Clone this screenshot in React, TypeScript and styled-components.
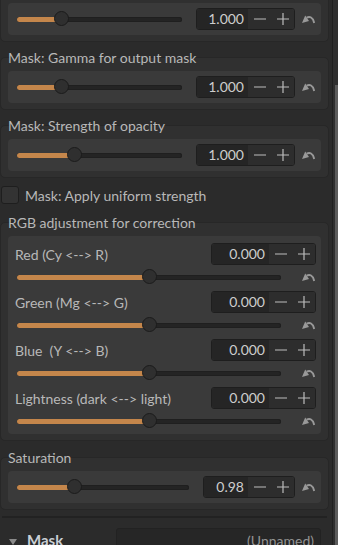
import React from 'react';
import styled, { createGlobalStyle } from 'styled-components';

const GlobalStyle = createGlobalStyle`
  html, body {
    margin: 0;
    padding: 0;
    background: #2b2b2b;
  }
`;

const Page = styled.div`
  width: 338px;
  height: 545px;
  overflow: hidden;
  display: flex;
  background: #2b2b2b;
  font-family: Lato, 'Noto Sans', sans-serif;
  font-size: 14px;
  color: #b8b8b8;
`;

const Content = styled.div`
  flex: 1;
  min-width: 0;
  padding-right: 3px;
  display: flex;
  flex-direction: column;
`;

const Scrollbar = styled.div`
  width: 5px;
  border-left: 1px solid #202020;
  background: #2f2f2f;
  display: flex;
  flex-direction: column;
  align-items: flex-end;
`;

const Thumb = styled.div`
  width: 3px;
  margin-top: 85px;
  flex: 1;
  background: #5c5c5c;
`;

const Frame = styled.div<{ $mt: number }>`
  margin-top: ${p => p.$mt}px;
  background: #303030;
  border: 1px solid #272727;
  border-radius: 5px;
  padding: 7px 7px 6px 7px;
  flex-shrink: 0;
`;

const LabeledFrame = styled(Frame)`
  padding-top: 0;
`;

const Legend = styled.div`
  position: relative;
  margin: -8px 0 5px 0;
  height: 16px;
  line-height: 16px;
  white-space: nowrap;
`;

const Card = styled.div`
  background: #3a3a3a;
  border-radius: 4px;
  height: 32px;
  display: flex;
  align-items: center;
  padding-left: 9px;
`;

const TallCard = styled.div`
  background: #3a3a3a;
  border-radius: 4px;
  padding: 7px 0 1px 0;
  display: flex;
  flex-direction: column;
  gap: 2px;
`;

const TrackWrap = styled.div<{ $w?: number }>`
  position: relative;
  height: 16px;
  display: flex;
  align-items: center;
  ${p => (p.$w ? `width: ${p.$w}px;` : 'flex: 1;')}
  margin-right: 14px;
`;

const Track = styled.div`
  width: 100%;
  height: 5px;
  border-radius: 3px;
  background: #242424;
  box-shadow: inset 0 0 0 1px #1f1f1f;
  overflow: hidden;
`;

const Fill = styled.div`
  height: 100%;
  background: #c4864b;
`;

const Knob = styled.div`
  position: absolute;
  top: 0;
  width: 15px;
  height: 15px;
  margin-left: -7.5px;
  border-radius: 50%;
  background: #2f2f2f;
  border: 1px solid #1b1b1b;
  box-sizing: border-box;
`;

const ValueBox = styled.div`
  display: flex;
  height: 22px;
  border: 1px solid #1e1e1e;
  border-radius: 3px;
  overflow: hidden;
  box-sizing: border-box;
  flex-shrink: 0;
`;

const NumberPart = styled.div<{ $w: number }>`
  width: ${p => p.$w}px;
  background: #252525;
  color: #cdcdcd;
  text-align: right;
  padding-right: 4px;
  box-sizing: border-box;
  line-height: 20px;
`;

const StepButton = styled.div`
  width: 23px;
  background: #2d2d2d;
  display: flex;
  align-items: center;
  justify-content: center;
`;

const ResetSlot = styled.div`
  width: 13px;
  height: 9px;
  margin: 0 6px 0 7px;
  display: flex;
  flex-shrink: 0;
`;

const RowHeader = styled.div`
  display: flex;
  align-items: center;
  justify-content: space-between;
  padding: 0 5px 0 7px;
  height: 22px;
`;

const RowLabel = styled.span`
  white-space: pre;
`;

const SliderLine = styled.div`
  display: flex;
  align-items: center;
  height: 24px;
  padding-left: 9px;
`;

const Spacer = styled.div`
  flex: 1;
`;

const CheckRow = styled.div`
  display: flex;
  align-items: center;
  gap: 6px;
  margin: 8px 0 0 1px;
  height: 18px;
  flex-shrink: 0;
`;

const CheckBox = styled.div`
  width: 18px;
  height: 18px;
  box-sizing: border-box;
  border: 1px solid #1e1e1e;
  border-radius: 3px;
  background: #333333;
`;

const Separator = styled.div`
  height: 2px;
  margin: 6px 2px 0 2px;
  background: #222222;
  flex-shrink: 0;
`;

const SectionHeader = styled.div`
  display: flex;
  align-items: flex-start;
  margin-top: 10px;
  padding-left: 9px;
  height: 30px;
  flex-shrink: 0;
`;

const Triangle = styled.div`
  width: 0;
  height: 0;
  margin-top: 11px;
  border-left: 4px solid transparent;
  border-right: 4px solid transparent;
  border-top: 6px solid #8a8a8a;
`;

const HeaderTitle = styled.div`
  margin: 3px 0 0 10px;
  font-weight: 700;
  font-size: 15px;
  color: #c9cfd5;
`;

const NameBox = styled.div`
  margin-left: auto;
  margin-right: 8px;
  width: 205px;
  height: 30px;
  box-sizing: border-box;
  background: #262626;
  border: 1px solid #222222;
  border-radius: 3px;
  color: #939393;
  text-align: right;
  padding: 3px 6px 0 0;
`;

const Minus = () => (
  <svg width="12" height="12" viewBox="0 0 12 12">
    <line x1="0" y1="6" x2="12" y2="6" stroke="#bdbdbd" strokeWidth="1.2" />
  </svg>
);

const Plus = () => (
  <svg width="12" height="12" viewBox="0 0 12 12">
    <line x1="0" y1="6" x2="12" y2="6" stroke="#bdbdbd" strokeWidth="1.2" />
    <line x1="6" y1="0" x2="6" y2="12" stroke="#bdbdbd" strokeWidth="1.2" />
  </svg>
);

// curved "undo" arrow: wedge head on the left, tail arching down to the right
const ResetIcon = () => (
  <ResetSlot>
    <svg width="13" height="9" viewBox="0 0 13 9">
      <path d="M0 8 L3.2 0.6 L7 6 Z" fill="#999999" />
      <path d="M4.6 2.6 C7.6 1.4 11 1.8 12.2 8" stroke="#999999" strokeWidth="1.9" fill="none" />
    </svg>
  </ResetSlot>
);

const Slider: React.FC<{ frac: number; width?: number }> = ({ frac, width }) => {
  const pos = `calc(7.5px + (100% - 15px) * ${frac})`;
  return (
    <TrackWrap $w={width}>
      <Track>
        <Fill style={{ width: pos }} />
      </Track>
      <Knob style={{ left: pos }} />
    </TrackWrap>
  );
};

const Value: React.FC<{ text: string; w: number }> = ({ text, w }) => (
  <ValueBox>
    <NumberPart $w={w}>{text}</NumberPart>
    <StepButton>
      <Minus />
    </StepButton>
    <StepButton>
      <Plus />
    </StepButton>
  </ValueBox>
);

const SingleSlider: React.FC<{ frac: number; text: string; w: number }> = ({ frac, text, w }) => (
  <Card>
    <Slider frac={frac} />
    <Value text={text} w={w} />
    <ResetIcon />
  </Card>
);

const rgbRows = [
  { label: 'Red (Cy <--> R)' },
  { label: 'Green (Mg <--> G)' },
  { label: 'Blue  (Y <--> B)' },
  { label: 'Lightness (dark <--> light)' },
];

export default function App() {
  return (
    <Page>
      <GlobalStyle />
      <Content>
        <Frame $mt={-5}>
          <SingleSlider frac={0.248} text="1.000" w={51} />
        </Frame>

        <LabeledFrame $mt={15}>
          <Legend>Mask: Gamma for output mask</Legend>
          <SingleSlider frac={0.248} text="1.000" w={51} />
        </LabeledFrame>

        <LabeledFrame $mt={15}>
          <Legend>Mask: Strength of opacity</Legend>
          <SingleSlider frac={0.334} text="1.000" w={51} />
        </LabeledFrame>

        <CheckRow>
          <CheckBox />
          <span>Mask: Apply uniform strength</span>
        </CheckRow>

        <LabeledFrame $mt={18}>
          <Legend>RGB adjustment for correction</Legend>
          <TallCard>
            {rgbRows.map(r => (
              <div key={r.label}>
                <RowHeader>
                  <RowLabel>{r.label}</RowLabel>
                  <Value text="0.000" w={57} />
                </RowHeader>
                <SliderLine>
                  <Slider frac={0.5} width={266} />
                  <Spacer />
                  <ResetIcon />
                </SliderLine>
              </div>
            ))}
          </TallCard>
        </LabeledFrame>

        <LabeledFrame $mt={16}>
          <Legend>Saturation</Legend>
          <SingleSlider frac={0.32} text="0.98" w={44} />
        </LabeledFrame>

        <Separator />

        <SectionHeader>
          <Triangle />
          <HeaderTitle>Mask</HeaderTitle>
          <NameBox>(Unnamed)</NameBox>
        </SectionHeader>
      </Content>
      <Scrollbar>
        <Thumb />
      </Scrollbar>
    </Page>
  );
}
